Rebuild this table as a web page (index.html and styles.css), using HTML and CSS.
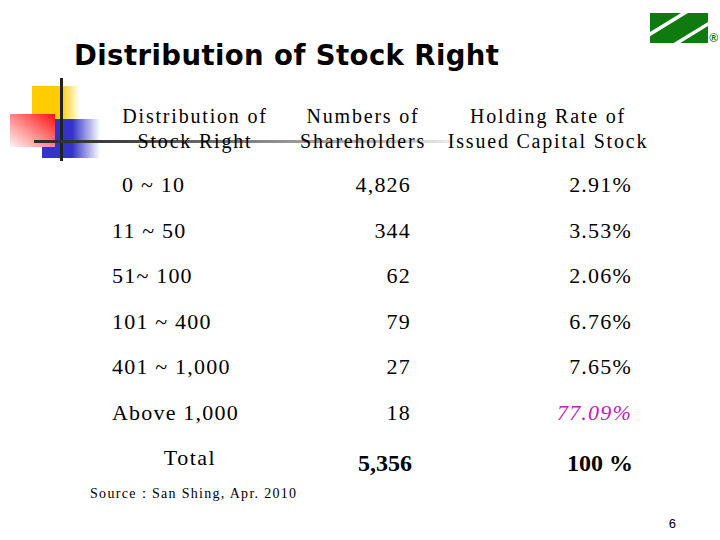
FILE: index.html
```html
<!DOCTYPE html>
<html>
<head>
<meta charset="utf-8">
<title>Distribution of Stock Right</title>
<link rel="stylesheet" href="styles.css">
</head>
<body>
<div class="slide">
  <div class="deco">
    <div class="sq-yellow"></div>
    <div class="sq-blue"></div>
    <div class="sq-red"></div>
    <div class="line-v"></div>
    <div class="line-h"></div>
  </div>
  <div class="top">
    <h1 class="title">Distribution of Stock Right</h1>
    <div class="logo">
      <svg width="58" height="30" viewBox="0 0 58 30">
        <polygon points="0,0 31,0 0,19" fill="#0f7a0f"/>
        <polygon points="38,0 58,0 58,9 23.7,30 0,30 0,23.3" fill="#0f7a0f"/>
        <polygon points="58,13 58,30 30.3,30" fill="#0f7a0f"/>
      </svg>
      <span class="reg">®</span>
    </div>
  </div>
  <div class="table">
    <div class="th">Distribution of<br>Stock Right</div>
    <div class="th">Numbers of<br>Shareholders</div>
    <div class="th">Holding Rate of<br>Issued Capital Stock</div>

    <div class="td c1 indent">0 ~ 10</div>
    <div class="td c2">4,826</div>
    <div class="td c3">2.91%</div>

    <div class="td c1">11 ~ 50</div>
    <div class="td c2">344</div>
    <div class="td c3">3.53%</div>

    <div class="td c1">51~ 100</div>
    <div class="td c2">62</div>
    <div class="td c3">2.06%</div>

    <div class="td c1">101 ~ 400</div>
    <div class="td c2">79</div>
    <div class="td c3">6.76%</div>

    <div class="td c1">401 ~ 1,000</div>
    <div class="td c2">27</div>
    <div class="td c3">7.65%</div>

    <div class="td c1">Above 1,000</div>
    <div class="td c2">18</div>
    <div class="td c3 hl">77.09%</div>

    <div class="tt t1">Total</div>
    <div class="tt t2">5,356</div>
    <div class="tt t3">100 %</div>

    <div class="source">Source：San Shing, Apr. 2010</div>
  </div>
  <div class="footer">6</div>
</div>
</body>
</html>
```

FILE: styles.css
```css
* { box-sizing: border-box; }
html, body { margin: 0; padding: 0; background: #fff; }
.slide {
  position: relative;
  width: 720px;
  height: 540px;
  display: flex;
  flex-direction: column;
  background: #fff;
  overflow: hidden;
}
.deco { position: absolute; left: 0; top: 0; width: 0; height: 0; }
.sq-yellow {
  position: absolute; left: 32px; top: 86px; width: 48px; height: 33px;
  background: linear-gradient(to right, #ffcc00 0%, #ffcc00 60%, rgba(255,204,0,0) 100%);
}
.sq-blue {
  position: absolute; left: 42px; top: 119px; width: 58px; height: 39px;
  background: linear-gradient(to right, #3333cc 0%, #3333cc 52%, rgba(51,51,204,0) 100%);
}
.sq-red {
  position: absolute; left: 10px; top: 114px; width: 45px; height: 33px;
  background: linear-gradient(to bottom left, #ff1010 0%, #ff7a7a 45%, #fff4f4 100%);
}
.line-v {
  position: absolute; left: 60px; top: 78px; width: 3px; height: 83px;
  background: #222;
}
.line-h {
  position: absolute; left: 34px; top: 140px; width: 440px; height: 3px;
  background: linear-gradient(to right, #2a2a2a 0%, #444 22%, #888 52%, #bdbdbd 78%, #e2e2e2 92%, rgba(255,255,255,0) 100%);
}
.top {
  display: flex;
  justify-content: space-between;
  align-items: flex-start;
  height: 104px;
  position: relative;
}
.title {
  margin: 42px 0 0 74px;
  font-family: "DejaVu Sans", sans-serif;
  font-weight: bold;
  font-size: 27.5px;
  letter-spacing: 0.42px;
  line-height: 1;
  color: #000;
}
.logo {
  display: flex;
  align-items: flex-end;
  margin: 13px 2px 0 0;
  height: 30px;
}
.logo svg { display: block; }
.reg {
  font-family: "Liberation Sans", sans-serif;
  font-weight: bold;
  font-size: 12px;
  line-height: 12px;
  color: #0f7a0f;
  margin-left: 1px;
  margin-bottom: -1px;
}
.table {
  position: relative;
  display: grid;
  grid-template-columns: 190px 146px 224px;
  margin-left: 100px;
  font-family: "Liberation Serif", serif;
  color: #000;
}
.th {
  text-align: center;
  font-size: 20px;
  line-height: 25px;
  letter-spacing: 1.8px;
  padding-bottom: 8px;
}
.td {
  font-size: 22px;
  line-height: 45.5px;
  height: 45.5px;
  letter-spacing: 1.2px;
  white-space: nowrap;
}
.c1 { padding-left: 12px; }
.c1.indent { padding-left: 22px; }
.c2 { text-align: right; padding-right: 25px; }
.c3 { text-align: right; padding-right: 28px; }
.hl { color: #c020c0; font-style: italic; }
.tt {
  height: 50px;
  white-space: nowrap;
}
.t1 { text-align: center; font-size: 22px; letter-spacing: 1.5px; padding-right: 10px; line-height: 46px; }
.t2 { text-align: right; font-weight: bold; font-size: 24px; padding-right: 24px; line-height: 56px; }
.t3 { text-align: right; font-weight: bold; font-size: 24px; padding-right: 27px; line-height: 56px; }
.source {
  grid-column: 1 / -1;
  margin-left: -10px;
  font-size: 14px;
  line-height: 18px;
  letter-spacing: 1.3px;
}
.footer {
  margin-top: auto;
  text-align: right;
  padding: 0 44px 9px 0;
  font-family: "Liberation Sans", sans-serif;
  font-size: 13px;
  line-height: 14px;
}
```
